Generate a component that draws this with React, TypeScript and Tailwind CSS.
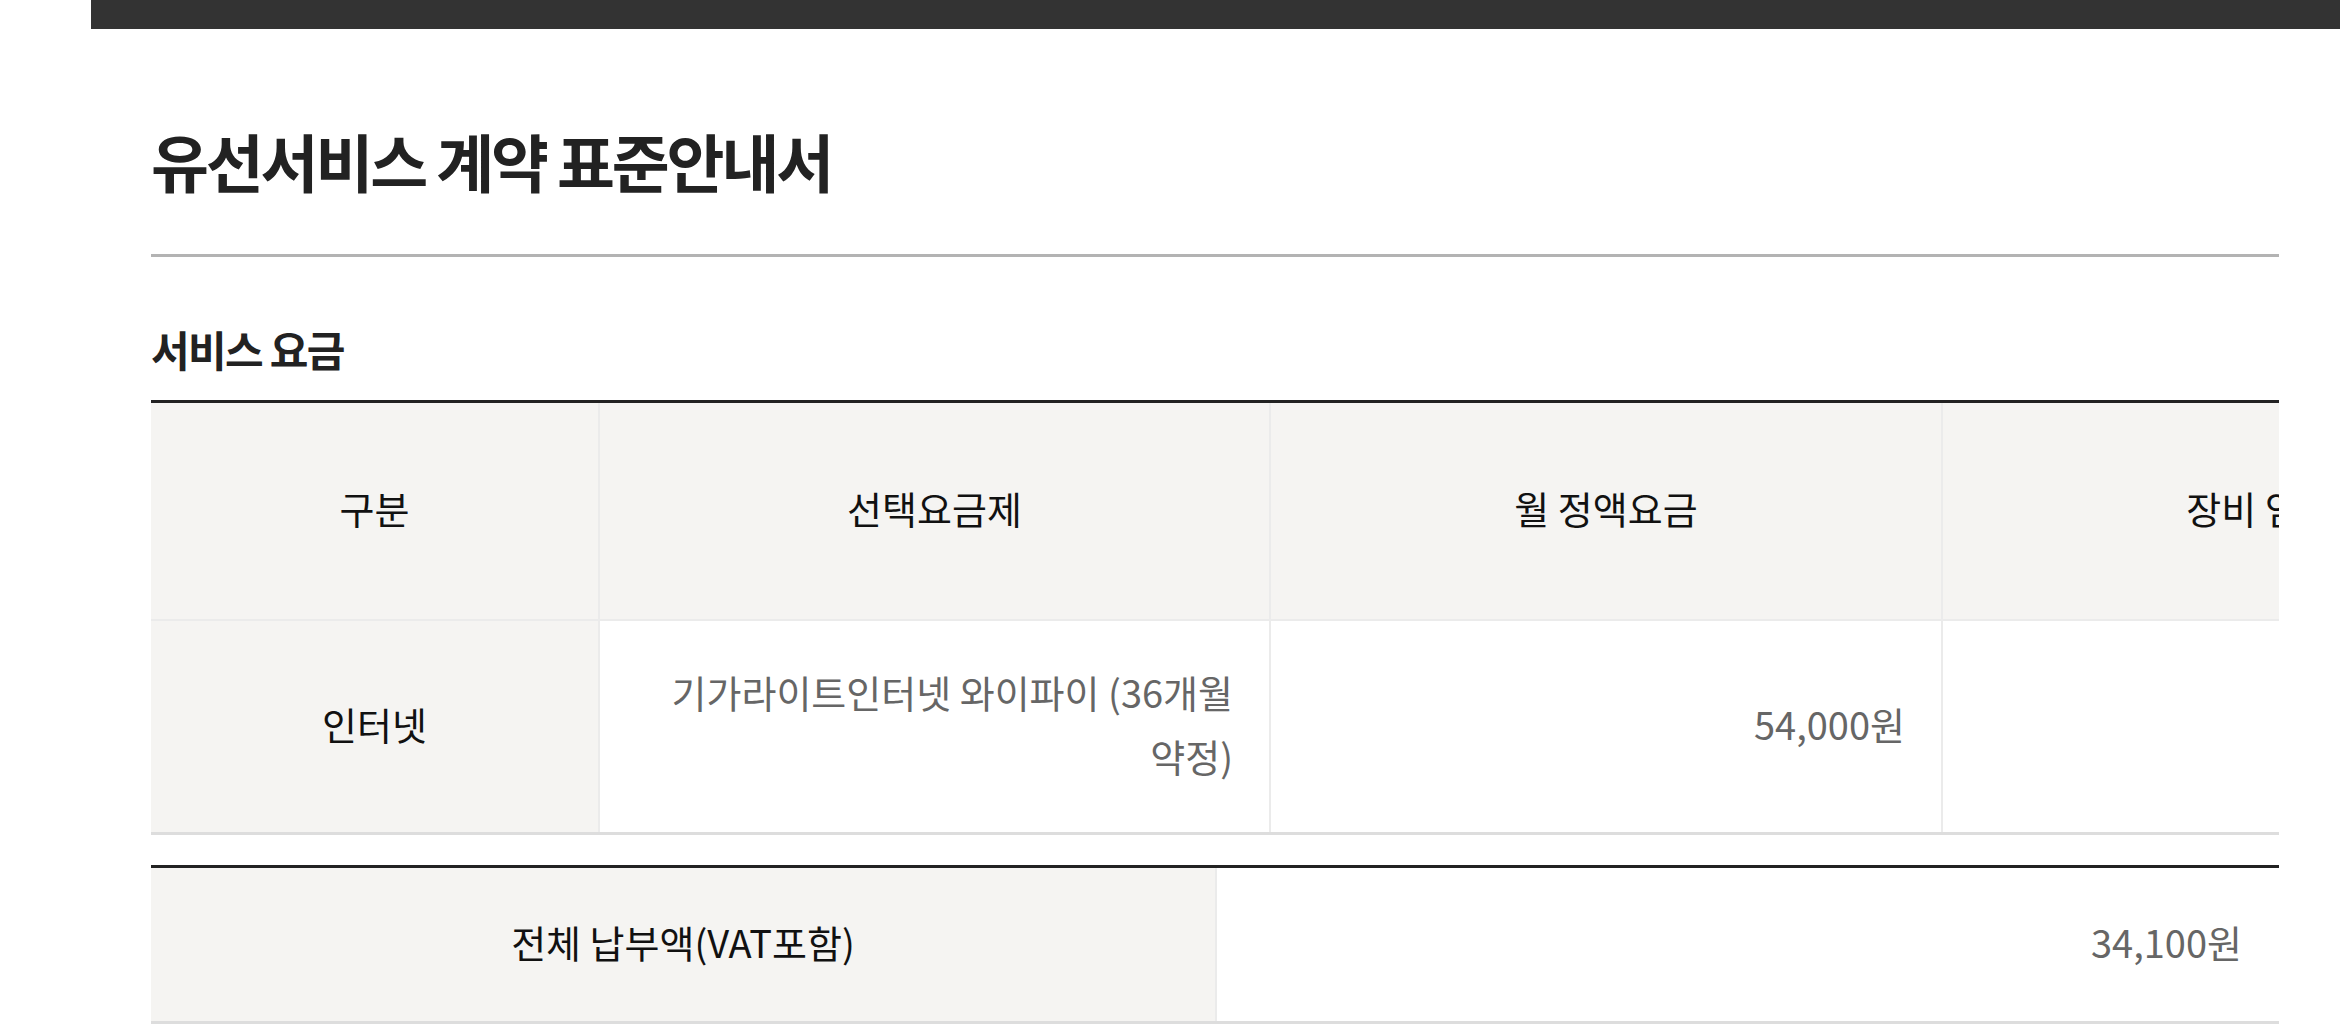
import React from 'react';

const font = { fontFamily: '"Noto Sans CJK KR", "Noto Sans", sans-serif' };

const headers = ['구분', '선택요금제', '월 정액요금', '장비 임대료'];

export default function App() {
  return (
    <div className="min-h-screen bg-white" style={font}>
      <div className="pl-[91px]">
        {/* top bar */}
        <div className="h-[29px] bg-[#333333]" />

        <div className="pl-[60px] pr-[61px]">
          <div className="overflow-hidden">
            <h1 className="mt-[99px] text-[63px] leading-[64px] font-bold tracking-[-0.05em] text-[#222222]">
              유선서비스 계약 표준안내서
            </h1>
            <div className="mt-[62px] h-[3px] bg-[#b3b3b3]" />

            <h2 className="mt-[71px] text-[42px] leading-[42px] font-bold tracking-[-0.04em] text-[#222222]">
              서비스 요금
            </h2>

            {/* fee table */}
            <div className="mt-[30px] border-t-[3px] border-[#222222] border-b-[3px] border-b-[#dddddd] w-[2462px]">
              <div className="flex h-[218px] border-b-2 border-[#ebebeb] bg-[#f5f4f2]">
                {headers.map((h, i) => (
                  <div key={h}
                    className={`flex items-center justify-center pb-[7px] text-[38px] text-[#111111] ${i === 0 ? 'w-[447px]' : 'border-l-2 border-[#ebebeb] ' + (i === 1 ? 'w-[671px]' : 'w-[672px]')}`}>
                    {h}
                  </div>
                ))}
              </div>
              <div className="flex h-[211px]">
                <div className="w-[447px] flex items-center justify-center pb-[7px] bg-[#f5f4f2] text-[38px] text-[#111111]">인터넷</div>
                <div className="w-[671px] border-l-2 border-[#ebebeb] flex items-center justify-end px-[36px] pb-[5px] text-right text-[38px] leading-[64px] text-[#666666]">
                  기가라이트인터넷 와이파이 (36개월 약정)
                </div>
                <div className="w-[672px] border-l-2 border-[#ebebeb] flex items-center justify-end px-[36px] pb-[7px] text-[38px] text-[#666666]">
                  54,000원
                </div>
                <div className="w-[672px] border-l-2 border-[#ebebeb]" />
              </div>
            </div>

            {/* total */}
            <div className="mt-[30px] border-t-[3px] border-[#222222] border-b-[3px] border-b-[#dddddd] grid grid-cols-2 h-[159px]">
              <div className="flex items-center justify-center pb-[7px] bg-[#f5f4f2] text-[38px] text-[#111111]">
                전체 납부액(VAT포함)
              </div>
              <div className="border-l-2 border-[#ebebeb] flex items-center justify-end pr-[37px] pb-[7px] text-[38px] text-[#666666]">
                34,100원
              </div>
            </div>
          </div>
        </div>
      </div>
    </div>
  );
}
